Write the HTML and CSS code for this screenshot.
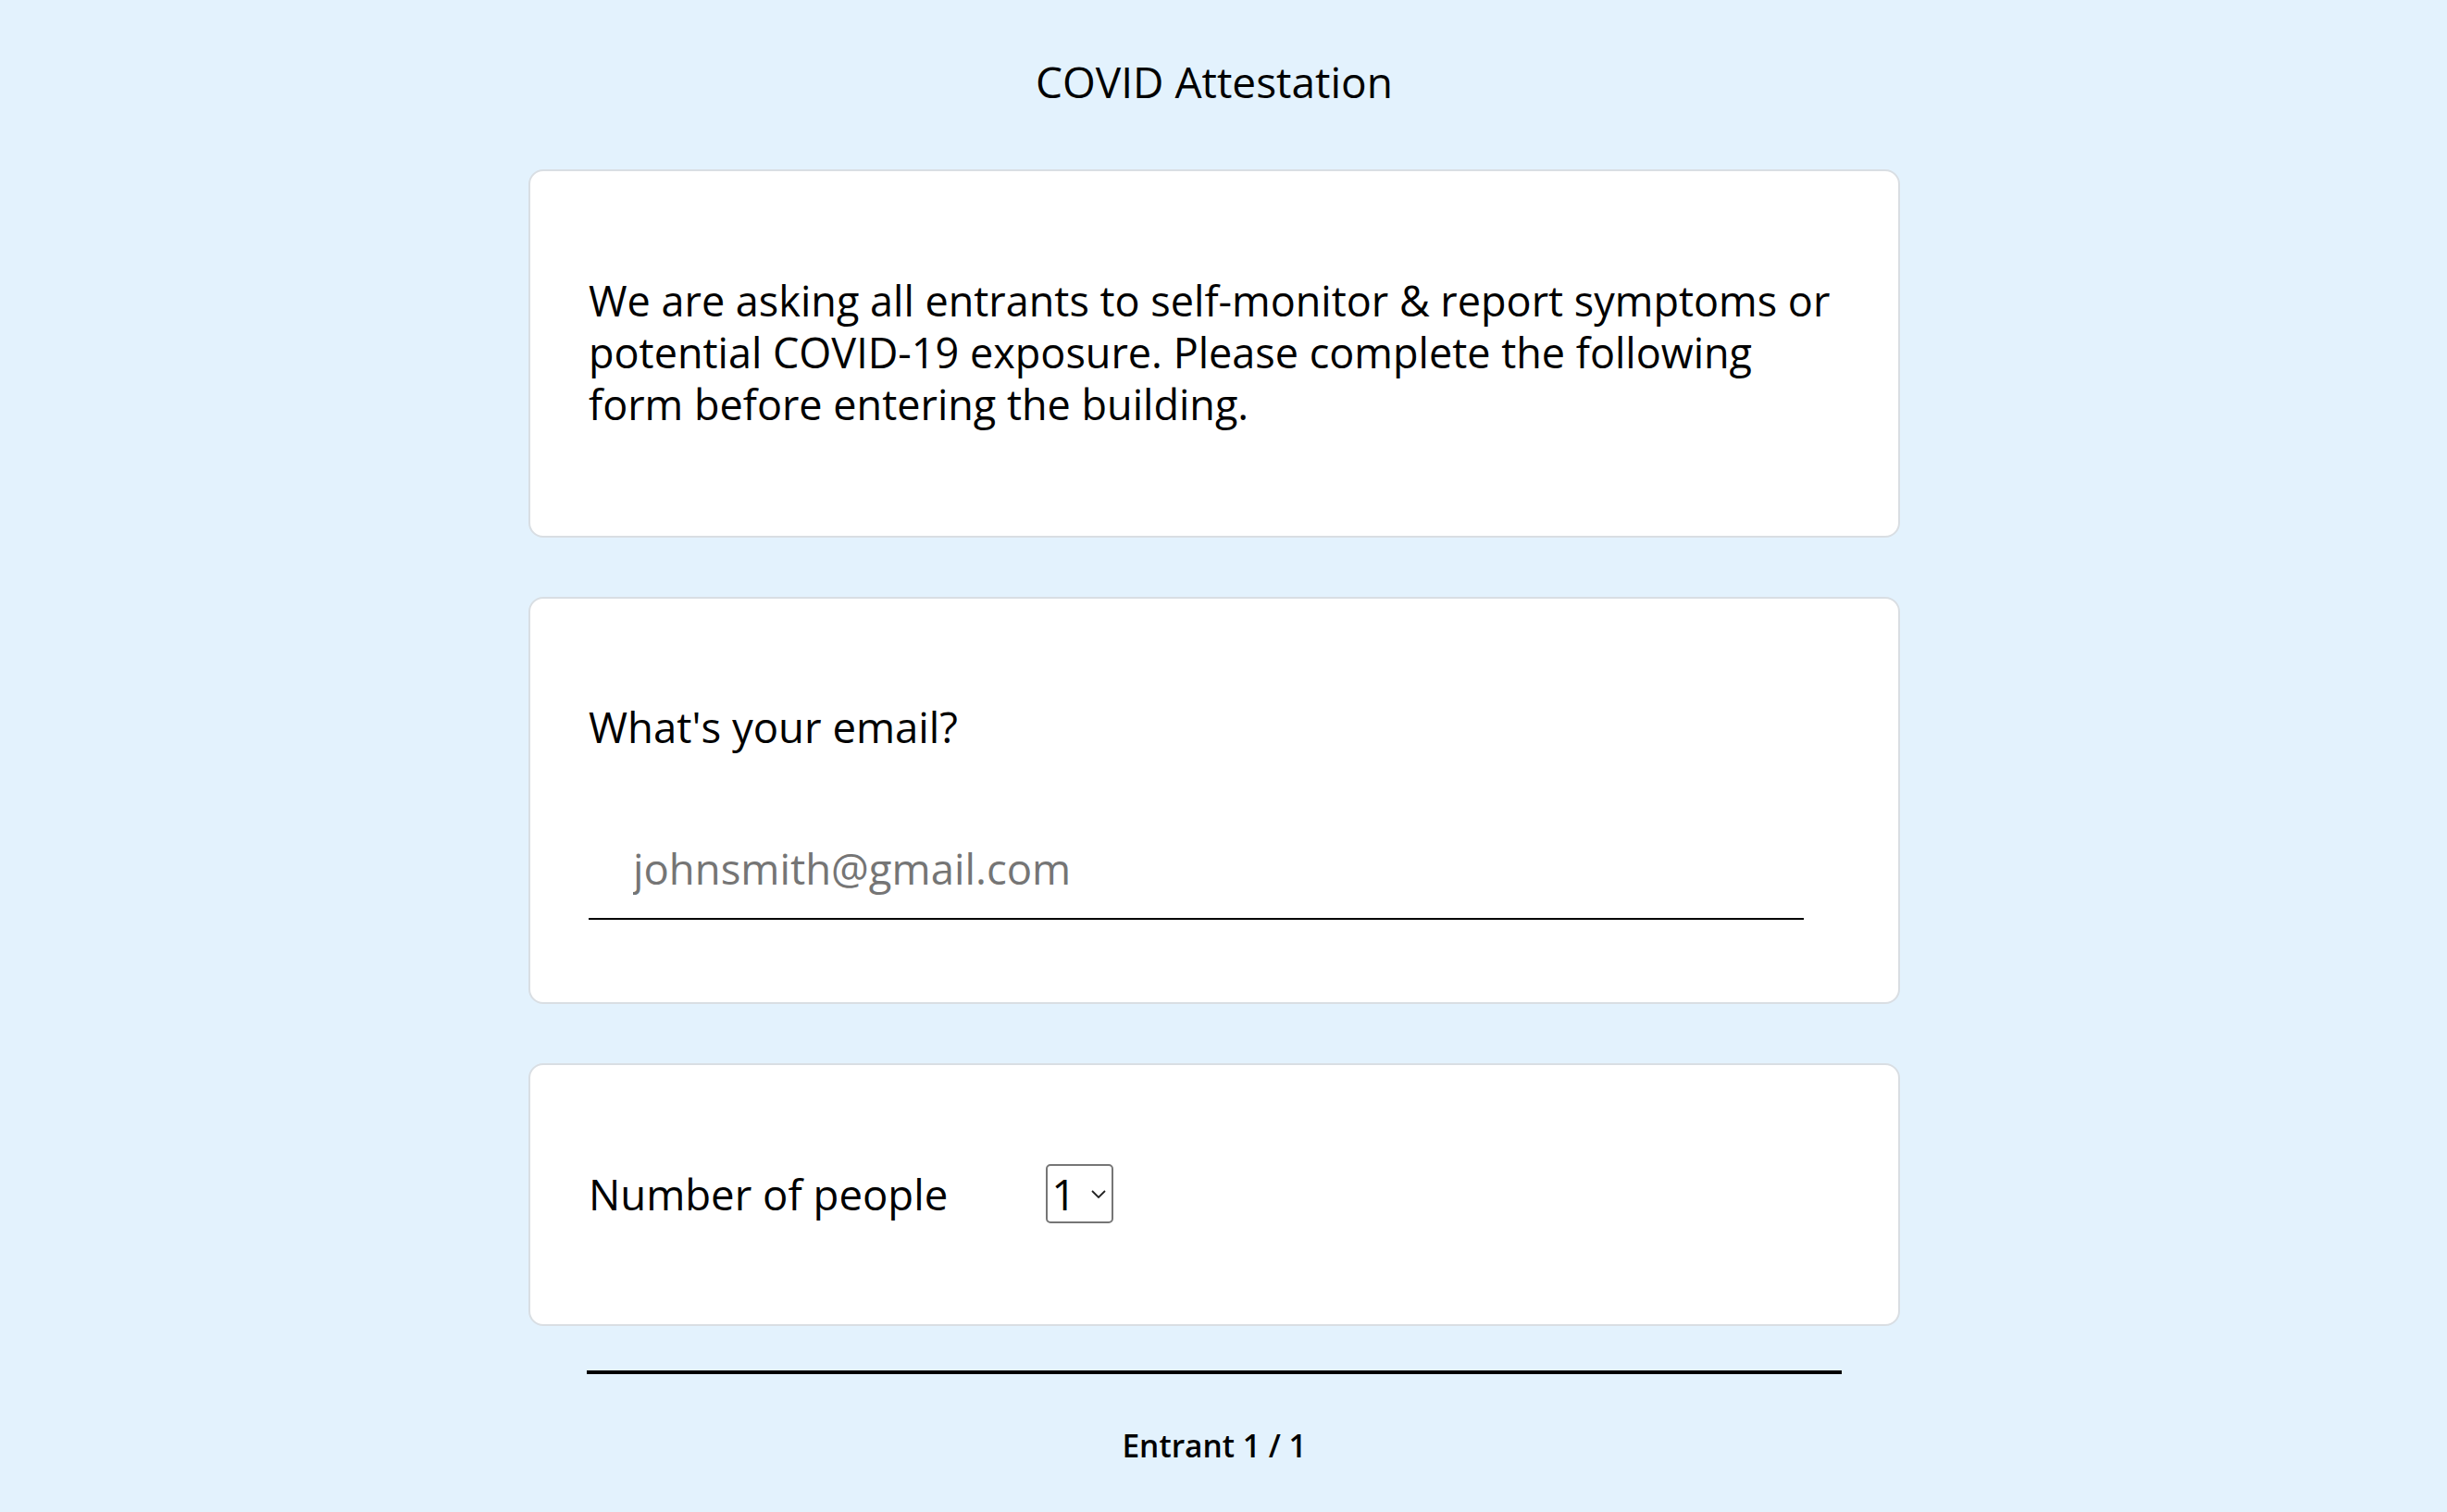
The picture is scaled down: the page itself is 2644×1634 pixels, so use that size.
FILE: index.html
```html
<!DOCTYPE html>
<html lang="en">
<head>
<meta charset="utf-8">
<title>COVID Attestation</title>
<link rel="stylesheet" href="styles.css">
</head>
<body>
<main class="page">
  <h1 class="title">COVID Attestation</h1>
  <section class="card card-intro">
    <p class="intro">We are asking all entrants to self-monitor &amp; report symptoms or<br>potential COVID-19 exposure. Please complete the following<br>form before entering the building.</p>
  </section>
  <section class="card card-email">
    <label class="question" for="email">What's your email?</label>
    <input class="email-input" id="email" type="email" placeholder="johnsmith@gmail.com">
  </section>
  <section class="card card-count">
    <span class="question">Number of people</span>
    <div class="select">
      <span class="select-value">1</span>
      <svg class="chevron" width="16" height="9" viewBox="0 0 16 9"><path d="M1 1 L8 8 L15 1" fill="none" stroke="#222" stroke-width="1.8"/></svg>
    </div>
  </section>
  <div class="rule"></div>
  <p class="entrant">Entrant 1 / 1</p>
</main>
</body>
</html>
```

FILE: styles.css
```css
html, body {
  margin: 0;
  padding: 0;
}
body {
  background: #e3f2fd;
  font-family: "Open Sans", "Noto Sans", sans-serif;
  color: #000;
  padding-right: 20px;
}
.page {
  width: 1482px;
  margin: 0 auto;
  display: flex;
  flex-direction: column;
  align-items: stretch;
}
.title {
  margin: 56px 0 63px;
  font-size: 46px;
  line-height: 64px;
  font-weight: 500;
  text-align: center;
}
.card {
  box-sizing: border-box;
  background: #fff;
  border: 2px solid #d9dee3;
  border-radius: 16px;
  padding-left: 63px;
  padding-right: 20px;
}
.card-intro {
  padding-top: 112px;
  padding-bottom: 114px;
}
.intro {
  margin: 0;
  font-size: 45px;
  font-weight: 500;
  line-height: 56px;
  white-space: nowrap;
}
.card-email {
  margin-top: 64px;
  padding-top: 110px;
  padding-bottom: 89px;
  display: flex;
  flex-direction: column;
  align-items: flex-start;
}
.question {
  font-size: 45.5px;
  font-weight: 500;
  line-height: 56px;
}
.email-input {
  margin: 97px 0 0;
  box-sizing: border-box;
  width: 1313px;
  border: 0;
  border-bottom: 2px solid #000;
  padding: 0 0 26px 48px;
  font-family: inherit;
  font-size: 45.5px;
  line-height: 56px;
  height: 84px;
  background: transparent;
  outline: none;
}
.email-input::placeholder {
  color: #757575;
}
.card-count {
  margin-top: 64px;
  padding-top: 107px;
  padding-bottom: 109px;
  display: flex;
  align-items: center;
  gap: 106px;
}
.select {
  box-sizing: border-box;
  width: 73px;
  height: 64px;
  border: 2px solid #767676;
  border-radius: 5px;
  display: flex;
  align-items: center;
  justify-content: space-between;
  padding: 0 6px 0 4px;
  flex-shrink: 0;
}
.select-value {
  font-size: 46px;
  line-height: 1;
}
.chevron {
  display: block;
  width: 16px;
  height: 9px;
  flex-shrink: 0;
}
.rule {
  align-self: center;
  width: 1356px;
  height: 4px;
  background: #000;
  margin-top: 48px;
}
.entrant {
  margin: 55px 0 0;
  font-size: 33.5px;
  line-height: 44px;
  font-weight: 600;
  text-align: center;
}
```
